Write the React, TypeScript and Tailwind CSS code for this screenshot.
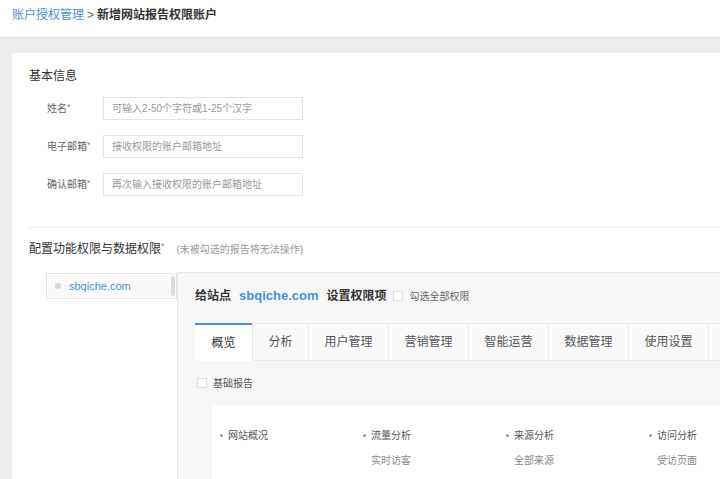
import React from "react";

const font = { fontFamily: '"Liberation Sans", "Noto Sans CJK SC", sans-serif' };

const fields = [
  { label: "姓名", placeholder: "可输入2-50个字符或1-25个汉字" },
  { label: "电子邮箱", placeholder: "接收权限的账户邮箱地址" },
  { label: "确认邮箱", placeholder: "再次输入接收权限的账户邮箱地址" },
];

const tabs = [
  { name: "概览", w: "w-[57px]" },
  { name: "分析", w: "w-[56px]" },
  { name: "用户管理", w: "w-[80px]" },
  { name: "营销管理", w: "w-[80px]" },
  { name: "智能运营", w: "w-[80px]" },
  { name: "数据管理", w: "w-[80px]" },
  { name: "使用设置", w: "w-[80px]" },
  { name: "", w: "w-[80px]" },
];

const reports = [
  { title: "网站概况", sub: "" },
  { title: "流量分析", sub: "实时访客" },
  { title: "来源分析", sub: "全部来源" },
  { title: "访问分析", sub: "受访页面" },
];

export default function App() {
  return (
    <div
      className="w-[720px] h-[479px] overflow-hidden bg-[#ececec] flex flex-col"
      style={font}
    >
      {/* Breadcrumb */}
      <div className="h-[37px] shrink-0 bg-white flex items-center pl-[12px] pb-[7px] text-[12px] shadow-[0_1px_2px_rgba(0,0,0,0.08)]">
        <span className="text-[#4a90d9]">账户授权管理</span>
        <span className="text-[#666] mx-[3px]">&gt;</span>
        <span className="text-[#333] font-bold">新增网站报告权限账户</span>
      </div>

      {/* Card */}
      <div className="flex-1 mt-[16px] ml-[12px] bg-white pl-[17px] pt-[14px] flex flex-col min-h-0">
        <div className="text-[12px] text-[#333] leading-[18px]">基本信息</div>

        <div className="flex flex-col gap-[15px] mt-[12px] pl-[18px]">
          {fields.map((f) => (
            <div key={f.label} className="flex items-center h-[23px]">
              <div className="w-[56px] text-[10px] text-[#666]">
                {f.label}
                <span className="text-[#e55] text-[9px] align-top">*</span>
              </div>
              <div className="w-[200px] h-[23px] border border-[#e3e3e3] flex items-center px-[8px] text-[10px] text-[#999]">
                {f.placeholder}
              </div>
            </div>
          ))}
        </div>

        <div className="h-px bg-[#eeeeee] mt-[31px]" />

        <div className="flex items-center mt-[12px] h-[18px]">
          <span className="text-[12px] text-[#333]">
            配置功能权限与数据权限
            <span className="text-[#e55] text-[9px] align-top">*</span>
          </span>
          <span className="ml-[12px] text-[10px] text-[#999]">(未被勾选的报告将无法操作)</span>
        </div>

        <div className="flex flex-1 mt-[14px] min-h-0">
          {/* site list */}
          <div className="w-[148px] pl-[17px] pt-[1px] shrink-0">
            <div className="relative h-[26px] border border-[#e6e6e6] bg-[#fafafa] flex items-center pl-[8px]">
              <span className="w-[6px] h-[6px] rounded-full bg-[#d8d8d8]" />
              <span className="ml-[8px] text-[11px] text-[#4a90d9]">sbqiche.com</span>
              <span className="absolute right-[1px] top-[2px] w-[4px] h-[20px] bg-[#dcdcdc] rounded-sm" />
            </div>
          </div>

          {/* permission panel */}
          <div className="flex-1 bg-[#f7f7f7] border-t border-l border-[#e6e6e6] pl-[17px] flex flex-col min-w-0">
            <div className="flex items-center h-[46px] text-[12px]">
              <span className="font-bold text-[#333]">给站点</span>
              <span className="font-bold text-[#4a90d9] text-[13px] ml-[8px]">sbqiche.com</span>
              <span className="font-bold text-[#333] ml-[8px]">设置权限项</span>
              <span className="w-[10px] h-[10px] border border-[#dcdcdc] bg-white ml-[6px]" />
              <span className="ml-[7px] text-[10px] text-[#666]">勾选全部权限</span>
            </div>

            <div className="flex h-[38px] mt-[4px] shrink-0">
              {tabs.map((t, i) => (
                <div
                  key={i}
                  className={
                    i === 0
                      ? `${t.w} shrink-0 bg-white border-t-2 border-[#4a90d9] flex items-center justify-center text-[12px] text-[#333]`
                      : `${t.w} shrink-0 bg-[#fafafa] border-t border-l border-b border-[#e8e8e8] flex items-center justify-center text-[12px] text-[#555]`
                  }
                >
                  {t.name}
                </div>
              ))}
            </div>

            <div className="flex items-center h-[44px] pl-[2px]">
              <span className="w-[10px] h-[10px] border border-[#dcdcdc] bg-white" />
              <span className="ml-[6px] text-[10px] text-[#555]">基础报告</span>
            </div>

            <div className="flex-1 bg-white ml-[17px] pt-[22px] pl-[8px] flex">
              {reports.map((r) => (
                <div key={r.title} className="w-[143px] shrink-0 flex flex-col">
                  <div className="flex items-center text-[10px] text-[#555] h-[16px]">
                    <span className="w-[3px] h-[3px] rounded-full bg-[#999] mr-[5px]" />
                    {r.title}
                  </div>
                  {r.sub && (
                    <div className="text-[10px] text-[#888] mt-[10px] pl-[8px] h-[16px]">{r.sub}</div>
                  )}
                </div>
              ))}
            </div>
          </div>
        </div>
      </div>
    </div>
  );
}
